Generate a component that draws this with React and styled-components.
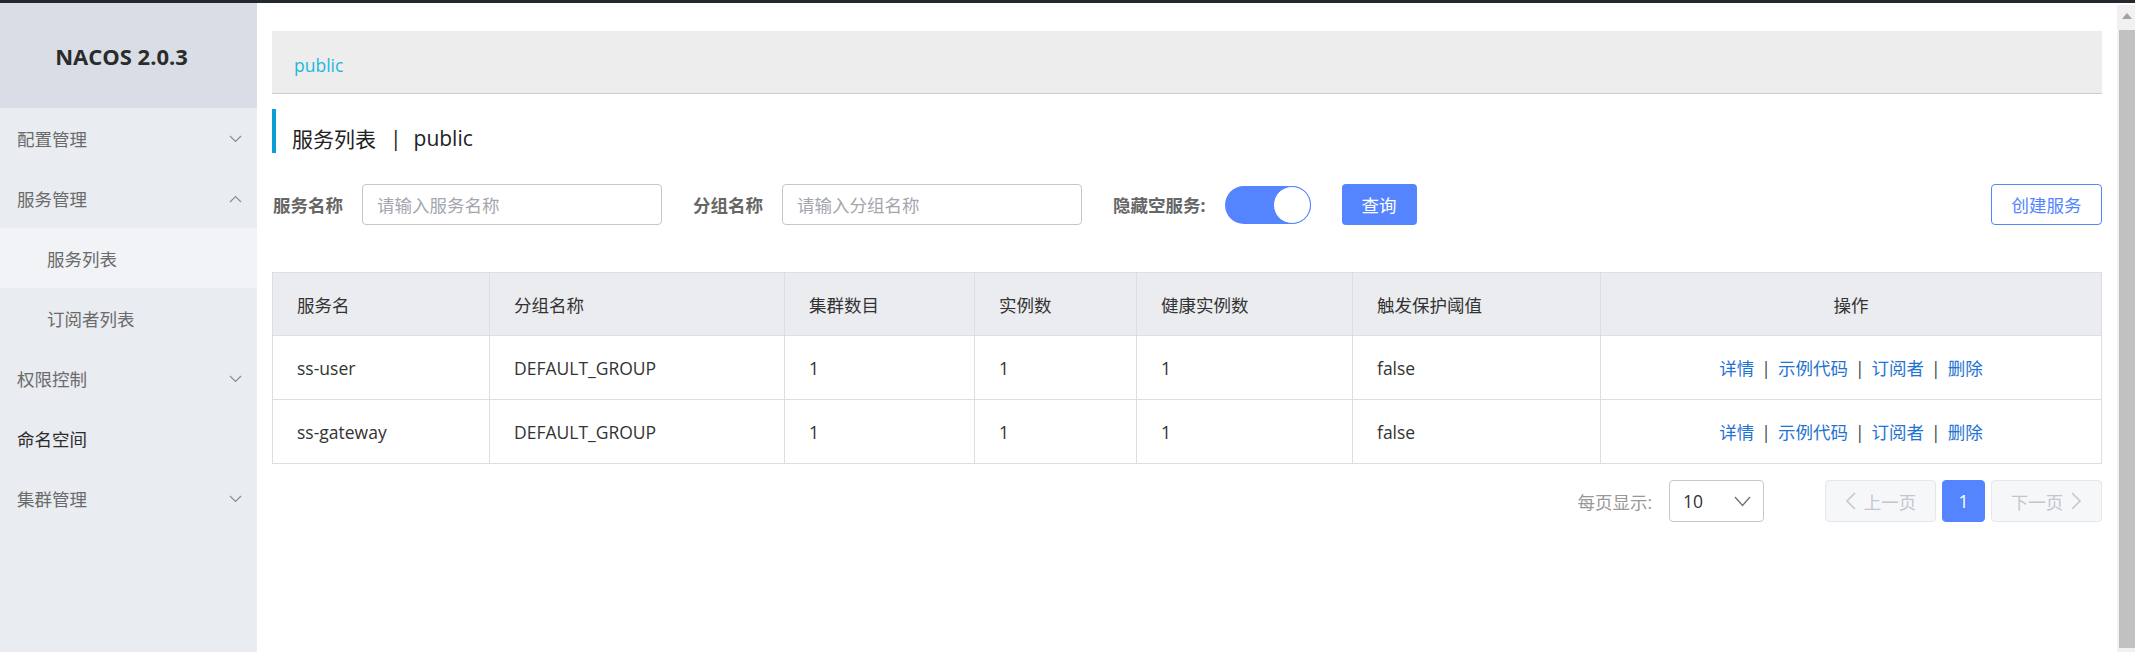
import styled, { createGlobalStyle } from 'styled-components';

const GlobalStyle = createGlobalStyle`
    html, body {
        margin: 0;
        padding: 0;
        height: 100%;
        overflow: hidden;
    }
    body {
        font-family: "Open Sans", "Noto Sans CJK SC", sans-serif;
        font-size: 17.5px;
        color: #333333;
        background: #ffffff;
    }
    * {
        box-sizing: border-box;
    }
`

const menu = [
    { label: '配置管理', arrow: 'down' },
    { label: '服务管理', arrow: 'up' },
    { label: '服务列表', sub: true, active: true },
    { label: '订阅者列表', sub: true },
    { label: '权限控制', arrow: 'down' },
    { label: '命名空间', leaf: true },
    { label: '集群管理', arrow: 'down' },
];

const columns = [
    { title: '服务名', width: 217 },
    { title: '分组名称', width: 295 },
    { title: '集群数目', width: 190 },
    { title: '实例数', width: 162 },
    { title: '健康实例数', width: 216 },
    { title: '触发保护阈值', width: 248 },
    { title: '操作', center: true },
];

const services = [
    { name: 'ss-user', group: 'DEFAULT_GROUP', clusters: 1, instances: 1, healthy: 1, threshold: 'false' },
    { name: 'ss-gateway', group: 'DEFAULT_GROUP', clusters: 1, instances: 1, healthy: 1, threshold: 'false' },
];

const actions = ['详情', '示例代码', '订阅者', '删除'];

const Chevron = ({ up }) => (
    <svg width="13" height="8" viewBox="0 0 13 8">
        <polyline
            points={up ? '1,7 6.5,1.5 12,7' : '1,1 6.5,6.5 12,1'}
            fill="none"
            stroke="#8a8d94"
            strokeWidth="1.2"
        />
    </svg>
);

const App = () => {
    return (
        <Page>
            <GlobalStyle />
            <TopBar />
            <Body>
                <Sidebar>
                    <Brand>NACOS 2.0.3</Brand>
                    {menu.map(item => (
                        <MenuItem key={item.label} sub={item.sub} active={item.active} leaf={item.leaf}>
                            <span>{item.label}</span>
                            {item.arrow && <Chevron up={item.arrow === 'up'} />}
                        </MenuItem>
                    ))}
                </Sidebar>
                <Main>
                    <Content>
                        <Crumb>
                            <CrumbLink>public</CrumbLink>
                        </Crumb>
                        <PageTitle>
                            服务列表<TitleSep>|</TitleSep>public
                        </PageTitle>
                        <Filters>
                            <FilterGroup>
                                <FieldLabel>服务名称</FieldLabel>
                                <Input placeholder="请输入服务名称" />
                                <FieldLabel>分组名称</FieldLabel>
                                <Input placeholder="请输入分组名称" />
                                <FieldLabel>隐藏空服务:</FieldLabel>
                                <Switch on />
                                <PrimaryButton>查询</PrimaryButton>
                            </FilterGroup>
                            <OutlineButton>创建服务</OutlineButton>
                        </Filters>
                        <Table>
                            <colgroup>
                                {columns.map(col => (
                                    <col key={col.title} style={col.width ? { width: col.width } : undefined} />
                                ))}
                            </colgroup>
                            <thead>
                                <tr>
                                    {columns.map(col => (
                                        <Th key={col.title} center={col.center}>{col.title}</Th>
                                    ))}
                                </tr>
                            </thead>
                            <tbody>
                                {services.map(s => (
                                    <tr key={s.name}>
                                        <Td>{s.name}</Td>
                                        <Td>{s.group}</Td>
                                        <Td>{s.clusters}</Td>
                                        <Td>{s.instances}</Td>
                                        <Td>{s.healthy}</Td>
                                        <Td>{s.threshold}</Td>
                                        <Td center>
                                            {actions.map((a, i) => (
                                                <span key={a}>
                                                    {i > 0 && <LinkSep>|</LinkSep>}
                                                    <ActionLink>{a}</ActionLink>
                                                </span>
                                            ))}
                                        </Td>
                                    </tr>
                                ))}
                            </tbody>
                        </Table>
                        <Pager>
                            <PagerLabel>每页显示:</PagerLabel>
                            <SizeSelect>
                                <span>10</span>
                                <svg width="17" height="11" viewBox="0 0 17 11">
                                    <polyline points="1,1 8.5,9.5 16,1" fill="none" stroke="#6b6e76" strokeWidth="1.3" />
                                </svg>
                            </SizeSelect>
                            <PageButtons>
                                <PageButton disabled wide>
                                    <svg width="11" height="18" viewBox="0 0 11 18">
                                        <polyline points="10,1 2,9 10,17" fill="none" stroke="#c4c6cf" strokeWidth="1.5" />
                                    </svg>
                                    上一页
                                </PageButton>
                                <PageButton current>1</PageButton>
                                <PageButton disabled wide>
                                    下一页
                                    <svg width="11" height="18" viewBox="0 0 11 18">
                                        <polyline points="1,1 9,9 1,17" fill="none" stroke="#c4c6cf" strokeWidth="1.5" />
                                    </svg>
                                </PageButton>
                            </PageButtons>
                        </Pager>
                    </Content>
                    <ScrollRail>
                        <ScrollArrow>
                            <svg width="10" height="6" viewBox="0 0 10 6">
                                <polygon points="0,6 5,0 10,6" fill="#a3a3a3" />
                            </svg>
                        </ScrollArrow>
                        <ScrollThumb />
                    </ScrollRail>
                </Main>
            </Body>
        </Page>
    )
}

export default App;


const Page = styled.div`
    width: 100%;
    height: 652px;
    display: flex;
    flex-direction: column;
`
const TopBar = styled.div`
    height: 3px;
    flex-shrink: 0;
    background: #24292f;
`
const Body = styled.div`
    flex: 1;
    display: flex;
    flex-direction: row;
    min-height: 0;
`
const Sidebar = styled.div`
    width: 257px;
    flex-shrink: 0;
    background: #e9ecf1;
    display: flex;
    flex-direction: column;
`
const Brand = styled.div`
    height: 105px;
    background: #d9dde5;
    display: flex;
    align-items: center;
    justify-content: center;
    padding-right: 14px;
    font-family: "Open Sans", sans-serif;
    font-weight: 700;
    font-size: 22px;
    color: #2b2b2b;
`
const MenuItem = styled.div`
    height: 60px;
    display: flex;
    flex-direction: row;
    align-items: center;
    justify-content: space-between;
    padding: 0 15px 0 ${props => props.sub ? '47px' : '17px'};
    background: ${props => props.active ? '#f1f3f6' : 'transparent'};
    color: ${props => props.leaf ? '#2b2b2b' : '#6b6b6b'};
    font-size: 17.5px;
    svg {
        margin-top: 1px;
    }
`
const Main = styled.div`
    flex: 1;
    min-width: 0;
    height: 100%;
    display: flex;
    flex-direction: row;
    background: #ffffff;
    overflow: hidden;
`
const Content = styled.div`
    flex: 1;
    min-width: 0;
    padding: 28px 15px 0 15px;
    display: flex;
    flex-direction: column;
`
const ScrollRail = styled.div`
    width: 18px;
    flex-shrink: 0;
    margin-top: 2px;
    background: #f1f1f1;
    display: flex;
    flex-direction: column;
    align-items: flex-end;
`
const ScrollArrow = styled.div`
    width: 16px;
    height: 25px;
    display: flex;
    align-items: center;
    justify-content: center;
    padding-bottom: 3px;
`
const ScrollThumb = styled.div`
    width: 16px;
    flex: 1;
    margin-bottom: 4px;
    background: #c1c1c1;
`
const Crumb = styled.div`
    height: 63px;
    background: #ededed;
    border-bottom: 1px solid #cccccc;
    display: flex;
    align-items: center;
    padding: 5px 0 0 22px;
`
const CrumbLink = styled.span`
    color: #1fb8dd;
    font-size: 17.5px;
`
const PageTitle = styled.div`
    margin-top: 15px;
    height: 44px;
    border-left: 4px solid #0aa0d6;
    padding: 14px 0 0 16px;
    display: flex;
    align-items: center;
    font-size: 21px;
    color: #222222;
`
const TitleSep = styled.span`
    margin: 0 12px 0 14px;
`
const Filters = styled.div`
    margin-top: 31px;
    height: 41px;
    display: flex;
    flex-direction: row;
    align-items: center;
    justify-content: space-between;
`
const FilterGroup = styled.div`
    display: flex;
    flex-direction: row;
    align-items: center;
`
const FieldLabel = styled.span`
    font-weight: 700;
    color: #666666;
    font-size: 17.5px;
    margin-right: 19px;
    margin-left: 1px;
`
const Input = styled.input`
    width: 300px;
    height: 41px;
    border: 1px solid #c4c6cf;
    border-radius: 4px;
    padding: 0 14px;
    font-family: "Open Sans", "Noto Sans CJK SC", sans-serif;
    font-size: 17.5px;
    color: #333333;
    outline: none;
    margin-right: 30px;
    &::placeholder {
        color: #a4a6ae;
    }
`
const Switch = styled.div`
    position: relative;
    width: 86px;
    height: 38px;
    border-radius: 19px;
    background: ${props => props.on ? '#5584ff' : '#e4e7ec'};
    margin-right: 31px;
    &::after {
        content: '';
        position: absolute;
        top: 0;
        right: ${props => props.on ? '0' : 'auto'};
        left: ${props => props.on ? 'auto' : '0'};
        width: 38px;
        height: 38px;
        border-radius: 50%;
        background: #ffffff;
        border: 1.5px solid #5584ff;
        box-sizing: border-box;
    }
`
const PrimaryButton = styled.button`
    width: 75px;
    height: 41px;
    border: none;
    border-radius: 4px;
    background: #5584ff;
    color: #ffffff;
    font-family: "Noto Sans CJK SC", sans-serif;
    font-size: 17.5px;
    padding: 0;
`
const OutlineButton = styled.button`
    width: 111px;
    height: 41px;
    border: 1px solid #5584ff;
    border-radius: 4px;
    background: #ffffff;
    color: #5584ff;
    font-family: "Noto Sans CJK SC", sans-serif;
    font-size: 17.5px;
    padding: 0;
`
const Table = styled.table`
    margin-top: 47px;
    width: 100%;
    table-layout: fixed;
    border-collapse: collapse;
    border: 1px solid #dcdee3;
`
const Th = styled.th`
    height: 63px;
    background: #ebecf0;
    border: 1px solid #dcdee3;
    padding: 0 24px;
    text-align: ${props => props.center ? 'center' : 'left'};
    font-weight: 400;
    font-size: 17.5px;
    color: #333333;
`
const Td = styled.td`
    height: 64px;
    border: 1px solid #dcdee3;
    padding: 0 24px;
    text-align: ${props => props.center ? 'center' : 'left'};
    font-size: 17.5px;
    color: #333333;
    white-space: nowrap;
`
const ActionLink = styled.span`
    color: #1f73d2;
`
const LinkSep = styled.span`
    margin: 0 7px;
    color: #444444;
`
const Pager = styled.div`
    margin-top: 16px;
    height: 42px;
    display: flex;
    flex-direction: row;
    align-items: center;
    justify-content: flex-end;
`
const PagerLabel = styled.span`
    color: #999999;
    font-size: 17.5px;
    margin-right: 17px;
`
const SizeSelect = styled.div`
    width: 95px;
    height: 42px;
    border: 1px solid #c4c6cf;
    border-radius: 4px;
    display: flex;
    flex-direction: row;
    align-items: center;
    justify-content: space-between;
    padding: 0 12px 0 13px;
    color: #333333;
    font-size: 17.5px;
    margin-right: 61px;
`
const PageButtons = styled.div`
    display: flex;
    flex-direction: row;
    gap: 6px;
`
const PageButton = styled.div`
    height: 42px;
    min-width: ${props => props.wide ? '111px' : '43px'};
    border-radius: 4px;
    display: flex;
    flex-direction: row;
    align-items: center;
    justify-content: center;
    gap: 8px;
    font-size: 17.5px;
    border: 1px solid ${props => props.current ? '#5584ff' : '#e6e7eb'};
    background: ${props => props.current ? '#5584ff' : '#f6f7f9'};
    color: ${props => props.current ? '#ffffff' : '#c4c6cf'};
`
